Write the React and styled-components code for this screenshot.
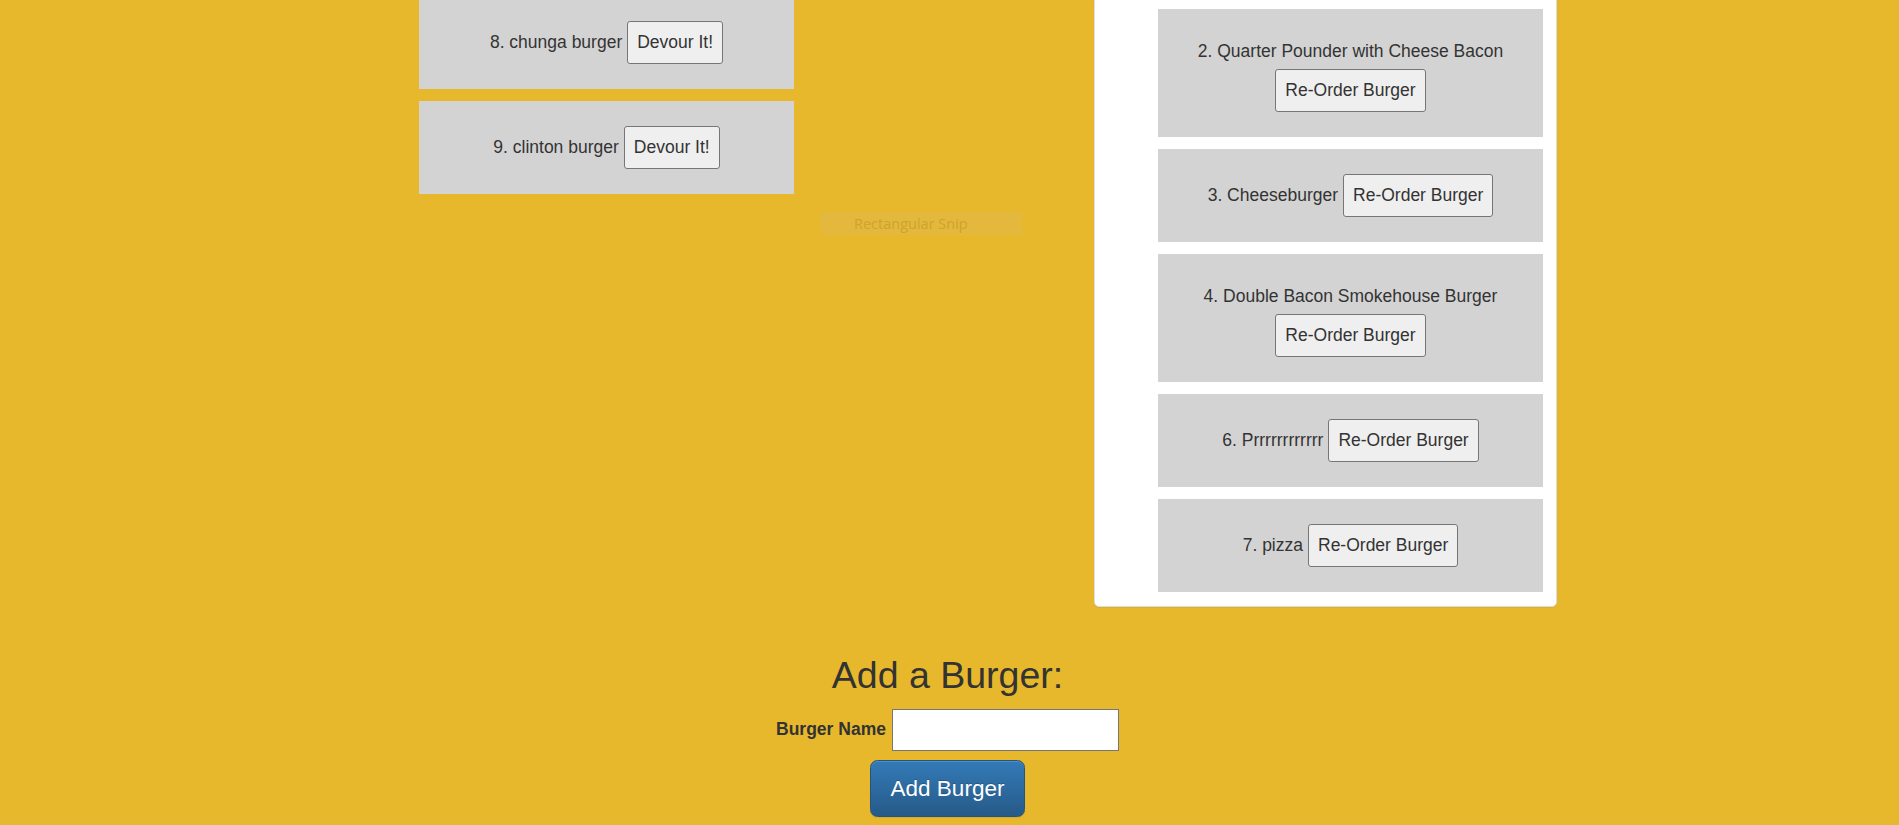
import styled, { createGlobalStyle } from 'styled-components'

const GlobalStyle = createGlobalStyle`
  html, body {
    margin: 0;
    padding: 0;
    background: #e8b82c;
  }
  body {
    font-family: "Liberation Sans", Arial, sans-serif;
    font-size: 17.5px;
    line-height: 25px;
    color: #333;
    overflow: hidden;
  }
`

const toEat = [
  { id: 8, name: 'chunga burger' },
  { id: 9, name: 'clinton burger' },
]

const eaten = [
  { id: 2, name: 'Quarter Pounder with Cheese Bacon' },
  { id: 3, name: 'Cheeseburger' },
  { id: 4, name: 'Double Bacon Smokehouse Burger' },
  { id: 6, name: 'Prrrrrrrrrrrr' },
  { id: 7, name: 'pizza' },
]

export default function App() {
  return (
    <Page>
      <GlobalStyle />
      <Columns>
        <List>
          {toEat.map(b => (
            <Card key={b.id}>
              <Name>{b.id}. {b.name}</Name>
              <PlainButton>Devour It!</PlainButton>
            </Card>
          ))}
        </List>
        <Panel>
          <List>
            {eaten.map(b => (
              <Card key={b.id}>
                <Name>{b.id}. {b.name}</Name>
                <PlainButton>Re-Order Burger</PlainButton>
              </Card>
            ))}
          </List>
        </Panel>
      </Columns>

      <AddSection>
        <Heading>Add a Burger:</Heading>
        <FormRow>
          <Label htmlFor="burger-name">Burger Name</Label>
          <Input id="burger-name" type="text" />
        </FormRow>
        <PrimaryButton>Add Burger</PrimaryButton>
      </AddSection>

      <Snip>Rectangular Snip</Snip>
    </Page>
  )
}

const Page = styled.div`
  position: relative;
  width: 1899px;
  height: 825px;
  overflow: hidden;
`

const Columns = styled.div`
  display: grid;
  grid-template-columns: 375px 463px;
  column-gap: 300px;
  align-items: start;
  margin-top: -4px;
  padding-left: 419px;
`

const List = styled.div`
  display: flex;
  flex-direction: column;
  gap: 12px;
`

const Panel = styled.div`
  background: #fff;
  border: 1px solid #ddd;
  border-radius: 5px;
  box-shadow: 0 1px 1px rgba(0, 0, 0, 0.05);
  padding: 12px 13px 14px 63px;
`

const Card = styled.div`
  display: flex;
  flex-wrap: wrap;
  justify-content: center;
  align-items: center;
  column-gap: 5px;
  padding: 25px 10px;
  background: #d3d3d3;
  text-align: center;
`

const Name = styled.span`
  line-height: 35px;
  white-space: nowrap;
`

const PlainButton = styled.button`
  font-family: inherit;
  font-size: 17.5px;
  line-height: 25px;
  color: #333;
  background: #efefef;
  border: 1px solid #767676;
  border-radius: 3px;
  padding: 8px 9px;
  margin: 0;
  cursor: pointer;
`

const AddSection = styled.div`
  display: flex;
  flex-direction: column;
  align-items: center;
  padding-right: 4px;
  margin-top: 48px;
`

const Heading = styled.h2`
  margin: 0 0 12.5px;
  font-size: 37.5px;
  line-height: 41.25px;
  font-weight: 500;
  color: #333;
`

const FormRow = styled.div`
  display: flex;
  align-items: center;
  gap: 6px;
`

const Label = styled.label`
  font-weight: bold;
`

const Input = styled.input`
  box-sizing: border-box;
  width: 227px;
  height: 42px;
  border: 1px solid #767676;
  background: #fff;
  margin: 0;
  padding: 2px 4px;
  font-family: inherit;
  font-size: 17.5px;
`

const PrimaryButton = styled.button`
  margin-top: 9.5px;
  font-family: inherit;
  font-size: 22.5px;
  line-height: 30px;
  padding: 12.5px 20px;
  color: #fff;
  text-shadow: 0 -1px 0 rgba(0, 0, 0, 0.2);
  background: linear-gradient(to bottom, #337ab7 0%, #265a88 100%);
  border: 1px solid #245580;
  border-radius: 7.5px;
  box-shadow: inset 0 1px 0 rgba(255, 255, 255, 0.15), 0 1px 1px rgba(0, 0, 0, 0.075);
  cursor: pointer;
`

const Snip = styled.div`
  position: absolute;
  left: 820px;
  top: 212px;
  box-sizing: border-box;
  width: 202px;
  height: 23px;
  padding-left: 34px;
  background: #e3b83d;
  color: #cea42a;
  font-family: "Open Sans", sans-serif;
  font-size: 14.5px;
  line-height: 23px;
  text-align: left;
`
